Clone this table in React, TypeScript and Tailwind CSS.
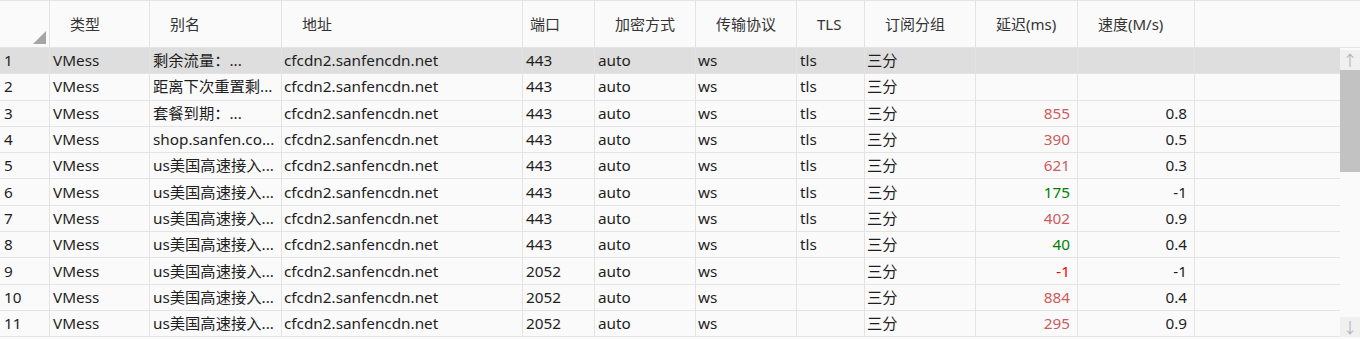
import React from 'react';

type Row = {
  id: number;
  type: string;
  alias: string;
  address: string;
  port: string;
  security: string;
  network: string;
  tls: string;
  group: string;
  delay: string;
  speed: string;
};

const font = { fontFamily: '"Noto Sans", "Noto Sans CJK SC", sans-serif' };

const columns = [
  { label: '', width: 'w-[50px]' },
  { label: '类型', width: 'w-[100px]' },
  { label: '别名', width: 'w-[132px]' },
  { label: '地址', width: 'w-[241px]' },
  { label: '端口', width: 'w-[72px]' },
  { label: '加密方式', width: 'w-[101px]' },
  { label: '传输协议', width: 'w-[101px]' },
  { label: 'TLS', width: 'w-[68px]' },
  { label: '订阅分组', width: 'w-[111px]' },
  { label: '延迟(ms)', width: 'w-[102px]' },
  { label: '速度(M/s)', width: 'w-[117px]' },
];

const us = 'us美国高速接入...';

const rows: Row[] = [
  { id: 1, type: 'VMess', alias: '剩余流量：...', address: 'cfcdn2.sanfencdn.net', port: '443', security: 'auto', network: 'ws', tls: 'tls', group: '三分', delay: '', speed: '' },
  { id: 2, type: 'VMess', alias: '距离下次重置剩...', address: 'cfcdn2.sanfencdn.net', port: '443', security: 'auto', network: 'ws', tls: 'tls', group: '三分', delay: '', speed: '' },
  { id: 3, type: 'VMess', alias: '套餐到期：...', address: 'cfcdn2.sanfencdn.net', port: '443', security: 'auto', network: 'ws', tls: 'tls', group: '三分', delay: '855', speed: '0.8' },
  { id: 4, type: 'VMess', alias: 'shop.sanfen.co...', address: 'cfcdn2.sanfencdn.net', port: '443', security: 'auto', network: 'ws', tls: 'tls', group: '三分', delay: '390', speed: '0.5' },
  { id: 5, type: 'VMess', alias: us, address: 'cfcdn2.sanfencdn.net', port: '443', security: 'auto', network: 'ws', tls: 'tls', group: '三分', delay: '621', speed: '0.3' },
  { id: 6, type: 'VMess', alias: us, address: 'cfcdn2.sanfencdn.net', port: '443', security: 'auto', network: 'ws', tls: 'tls', group: '三分', delay: '175', speed: '-1' },
  { id: 7, type: 'VMess', alias: us, address: 'cfcdn2.sanfencdn.net', port: '443', security: 'auto', network: 'ws', tls: 'tls', group: '三分', delay: '402', speed: '0.9' },
  { id: 8, type: 'VMess', alias: us, address: 'cfcdn2.sanfencdn.net', port: '443', security: 'auto', network: 'ws', tls: 'tls', group: '三分', delay: '40', speed: '0.4' },
  { id: 9, type: 'VMess', alias: us, address: 'cfcdn2.sanfencdn.net', port: '2052', security: 'auto', network: 'ws', tls: '', group: '三分', delay: '-1', speed: '-1' },
  { id: 10, type: 'VMess', alias: us, address: 'cfcdn2.sanfencdn.net', port: '2052', security: 'auto', network: 'ws', tls: '', group: '三分', delay: '884', speed: '0.4' },
  { id: 11, type: 'VMess', alias: us, address: 'cfcdn2.sanfencdn.net', port: '2052', security: 'auto', network: 'ws', tls: '', group: '三分', delay: '295', speed: '0.9' },
];

// delay colour: fast = green, failed = red, otherwise indian red
const delayColor = (d: string) => {
  const n = Number(d);
  if (n < 0) return 'text-[#ff0000]';
  if (n > 0 && n < 200) return 'text-[#008000]';
  return 'text-[#cd5c5c]';
};

const App: React.FC = () => {
  return (
    <div className="w-[1360px] h-[339px] bg-[#fafafa] text-[#1e1e1e] overflow-hidden flex flex-col border-t border-[#e3e3e3]" style={font}>
      {/* Header */}
      <div className="flex h-[47px] shrink-0 border-b border-[#e3e3e3] text-[15px] text-[#333]">
        {columns.map((col, i) => (
          <div
            key={i}
            className={`${col.width} shrink-0 border-r border-[#e3e3e3] flex items-center ${i === 4 ? 'pl-[7px]' : 'pl-[20px]'} relative`}
          >
            {i === 0 ? (
              <svg className="absolute right-[3px] bottom-[3px]" width="13" height="13" viewBox="0 0 13 13">
                <polygon points="13,0 13,13 0,13" fill="#a5a5a5" />
              </svg>
            ) : (
              col.label
            )}
          </div>
        ))}
        <div className="flex-1" />
      </div>

      {/* Body */}
      <div className="flex flex-1 min-h-0">
        <div className="w-[1340px] shrink-0 text-[15.3px]">
          {rows.map((r) => (
            <div
              key={r.id}
              className={`flex h-[26.3px] items-center border-b border-[#e3e3e3] ${r.id === 1 ? 'bg-[#dedede]' : ''}`}
            >
              <div className="w-[50px] shrink-0 h-full flex items-center pl-[4px] border-r border-[#e3e3e3]">{r.id}</div>
              <div className="w-[100px] shrink-0 h-full flex items-center pl-[3px] border-r border-[#e3e3e3]">{r.type}</div>
              <div className="w-[132px] shrink-0 h-full flex items-center pl-[3px] border-r border-[#e3e3e3] whitespace-nowrap overflow-hidden">{r.alias}</div>
              <div className="w-[241px] shrink-0 h-full flex items-center pl-[2px] border-r border-[#e3e3e3]">{r.address}</div>
              <div className="w-[72px] shrink-0 h-full flex items-center pl-[3px] border-r border-[#e3e3e3]">{r.port}</div>
              <div className="w-[101px] shrink-0 h-full flex items-center pl-[3px] border-r border-[#e3e3e3]">{r.security}</div>
              <div className="w-[101px] shrink-0 h-full flex items-center pl-[2px] border-r border-[#e3e3e3]">{r.network}</div>
              <div className="w-[68px] shrink-0 h-full flex items-center pl-[3px] border-r border-[#e3e3e3]">{r.tls}</div>
              <div className="w-[111px] shrink-0 h-full flex items-center pl-[2px] border-r border-[#e3e3e3]">{r.group}</div>
              <div className={`w-[102px] shrink-0 h-full flex items-center justify-end pr-[7px] border-r border-[#e3e3e3] ${delayColor(r.delay)}`}>{r.delay}</div>
              <div className="w-[117px] shrink-0 h-full flex items-center justify-end pr-[7px] border-r border-[#e3e3e3]">{r.speed}</div>
              <div className="flex-1" />
            </div>
          ))}
        </div>

        {/* Scrollbar */}
        <div className="w-[20px] shrink-0 flex flex-col bg-[#fafafa] pt-[2px] pb-[2px]">
          <div className="h-[20px] bg-[#f0f0f0] flex items-center justify-center text-[#b4b4b4] text-[15px]">↑</div>
          <div className="h-[102px] bg-[#c2c2c2]" />
          <div className="flex-1" />
          <div className="h-[20px] bg-[#f0f0f0] flex items-center justify-center text-[#b4b4b4] text-[15px]">↓</div>
        </div>
      </div>
    </div>
  );
};

export default App;
